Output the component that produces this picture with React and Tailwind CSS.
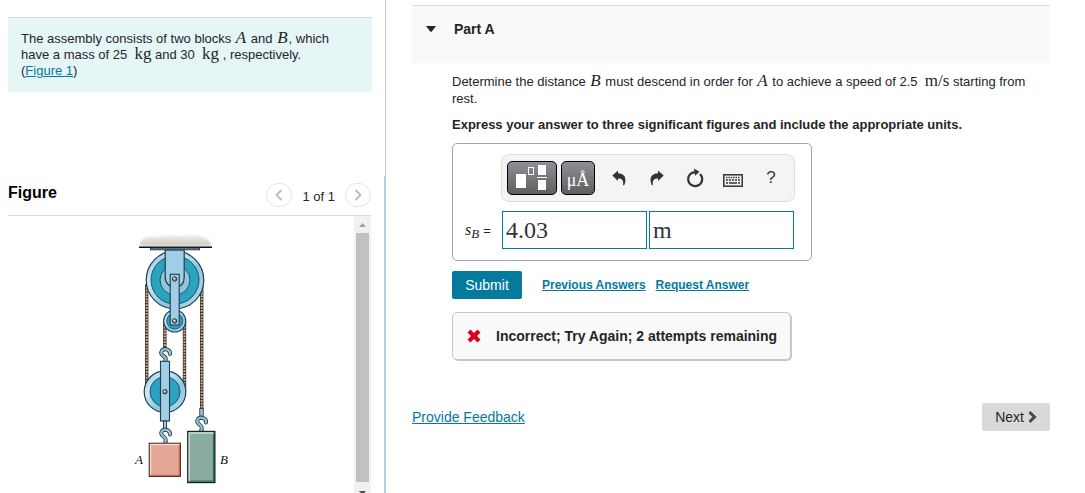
import React from "react";

function MathText({ children, italic = false }) {
  return (
    <span className={`font-["Liberation_Serif",serif] text-[17px] leading-[0] ${italic ? "px-px italic" : ""}`}>
      {children}
    </span>
  );
}

function Rope({ x, y1, y2 }) {
  return (
    <g>
      <line x1={x} x2={x} y1={y1} y2={y2} stroke="#3c3029" strokeWidth="3.4" />
      <line x1={x} x2={x} y1={y1} y2={y2} stroke="#d6b793" strokeWidth="2" strokeDasharray="1.7 1.2" />
    </g>
  );
}

function Hook({ x, y, h }) {
  const d = `M5 4.500 C5.500 0.500 0 -2 -3 1 C-7 7 4 6 0 ${h}`;
  return (
    <g transform={`translate(${x} ${y})`} fill="none" strokeLinecap="round">
      <path d={d} stroke="#26343b" strokeWidth="4" />
      <path d={d} stroke="#8fc3dc" strokeWidth="2.4" />
    </g>
  );
}

function Pin({ x, y }) {
  return (
    <g>
      <circle cx={x} cy={y} r="2.2" fill="#8b8f92" stroke="#222" strokeWidth="0.9" />
      <circle cx={x - 0.5} cy={y - 0.6} r="0.8" fill="#fff" />
    </g>
  );
}

function PulleyFigure() {
  return (
    <svg viewBox="130 225 110 262" className="ml-[122px] mt-[9px] block h-[262px] w-[110px]" role="img" aria-label="Pulley assembly with blocks A and B">
      <defs>
        <linearGradient id="ceiling" x1="0" y1="0" x2="0" y2="1">
          <stop offset="0" stopColor="#efeee8" />
          <stop offset="1" stopColor="#cfccc0" />
        </linearGradient>
        <linearGradient id="rim" x1="0" y1="0" x2="1" y2="1">
          <stop offset="0" stopColor="#83bddb" />
          <stop offset="0.3" stopColor="#d4eaf5" />
          <stop offset="0.6" stopColor="#8fc4df" />
          <stop offset="1" stopColor="#b9dcec" />
        </linearGradient>
        <filter id="soft"><feGaussianBlur stdDeviation="1" /></filter>
      </defs>
      <path d="M140 246 C139 239 147 236 155 237 C166 234 180 237 190 235 C201 235 212 239 211 246Z" fill="url(#ceiling)" filter="url(#soft)" />
      <Rope x={146.7} y1={284} y2={393} />
      <Rope x={201.7} y1={284} y2={409} />
      <Rope x={164.8} y1={321} y2={349} />
      <Rope x={184.5} y1={321} y2={391} />
      <circle cx="175" cy="280" r="28.8" fill="url(#rim)" stroke="#1c4152" strokeWidth="1.2" />
      <circle cx="175" cy="280" r="24" fill="#2ba2be" stroke="#19566c" strokeWidth="1" />
      <circle cx="175" cy="280" r="15" fill="#8fc5df" stroke="#19566c" strokeWidth="1" />
      <path d="M165.2 250H184.2V277C184.2 283 181 287 175 287C169 287 165.2 283 165.2 277Z" fill="#9fcee6" stroke="#203d4b" strokeWidth="1.2" />
      <path d="M139 247.2H212" stroke="#111" strokeWidth="1.4" />
      <rect x="150.500" y="248" width="49" height="1.800" fill="#6bb0cf" stroke="#1f2c33" strokeWidth="0.9" />
      <circle cx="174.7" cy="321" r="11" fill="url(#rim)" stroke="#1c4152" strokeWidth="1.1" />
      <circle cx="174.7" cy="321" r="8" fill="#2ba2be" stroke="#19566c" strokeWidth="0.9" />
      <rect x="170.200" y="274.300" width="9" height="50.700" fill="#9fcee6" stroke="#203d4b" strokeWidth="1.1" />
      <Pin x={174.6} y={279} />
      <Pin x={174.6} y={321} />

      <circle cx="165" cy="391.700" r="20.800" fill="url(#rim)" stroke="#1c4152" strokeWidth="1.2" />
      <circle cx="165" cy="391.700" r="15" fill="#2ba2be" stroke="#19566c" strokeWidth="1" />
      <Hook x={165} y={349.5} h={12} />
      <rect x="160.500" y="361.300" width="9" height="59.700" fill="#9fcee6" stroke="#203d4b" strokeWidth="1.1" />
      <Pin x={165} y={391.8} />
      <rect x="163.500" y="421" width="3" height="8" fill="#9fcee6" stroke="#26343b" strokeWidth="0.9" />
      <Hook x={165} y={430} h={13} />
      <rect x="199.800" y="408.500" width="3.400" height="8" fill="#9fcee6" stroke="#26343b" strokeWidth="0.9" />
      <Hook x={201} y={418} h={13} />

      <rect x="149.300" y="443.300" width="31" height="33" fill="#e2a797" stroke="#35231e" strokeWidth="1.2" />
      <path d="M150.500 475.500V444.500H179.500" fill="none" stroke="#f7d9cd" strokeWidth="1.4" />
      <path d="M150.500 475.300H179.300V445" fill="none" stroke="#d5694f" strokeWidth="1.2" />
      <rect x="187.800" y="431.500" width="27" height="51" fill="#89aba0" stroke="#16251f" strokeWidth="1.400" />
      <path d="M189.200 481V433H213" fill="none" stroke="#cbe0d7" strokeWidth="1.400" />
      <path d="M189.500 481.200H213.500V434" fill="none" stroke="#35705c" strokeWidth="1.300" />
      <g fontFamily="Liberation Serif, serif" fontStyle="italic" fontSize="13" fill="#111">
        <text x="135" y="464">A</text>
        <text x="220" y="464">B</text>
      </g>
    </svg>
  );
}

function Chevron({ flip = false }) {
  return (
    <svg viewBox="0 0 8 12" className="h-3 w-2" fill="none" stroke="#bdbdbd" strokeWidth="2" aria-hidden="true">
      <path d={flip ? "M1.500 1L6.500 6L1.500 11" : "M6.500 1L1.500 6L6.500 11"} />
    </svg>
  );
}

function Sidebar() {
  return (
    <aside className="flex h-full w-[386px] shrink-0 flex-col">
      <section className="h-[176px] shrink-0 border-r border-[#c3d0dc] pl-2 pr-[13px] pt-[17px]">
        <p className="h-[75px] border-t border-[#d3dfe0] bg-[#e6f5f6] px-[13px] pt-[13px] text-[13px] leading-4">
          The assembly consists of two blocks <MathText italic>A</MathText> and <MathText italic>B</MathText>, which
          <br />
          have a mass of 25 &nbsp;<MathText>kg</MathText> and 30 &nbsp;<MathText>kg</MathText> , respectively.
          <br />
          (<a href="#figure" className="text-[#047a9c] underline">Figure 1</a>)
        </p>
      </section>
      <section id="figure" className="flex min-h-0 flex-1 flex-col border-r-2 border-[#b9cde0] pl-2 pr-[13px]">
        <header className="flex h-10 shrink-0 items-start justify-between border-b border-[#dadada] pt-[7px]">
          <h2 className="text-[16px] font-bold leading-5 text-black">Figure</h2>
          <nav className="flex items-center gap-[10px]" aria-label="Figure pages">
            <button type="button" aria-label="Previous figure" className="flex h-6 w-[26px] items-center justify-center rounded-full border border-[#e4e4e4] bg-white">
              <Chevron />
            </button>
            <span className="pt-[3px] text-[13px] leading-4">1 of 1</span>
            <button type="button" aria-label="Next figure" className="flex h-6 w-[26px] items-center justify-center rounded-full border border-[#e4e4e4] bg-white">
              <Chevron flip />
            </button>
          </nav>
        </header>
        <div className="flex min-h-0 flex-1 overflow-hidden">
          <div className="min-w-0 flex-1 overflow-hidden">
            <PulleyFigure />
          </div>
          <div className="flex w-[17px] shrink-0 flex-col items-center bg-[#f1f1f1]" aria-hidden="true">
            <svg viewBox="0 0 17 17" className="h-[17px] w-[17px] shrink-0" fill="#a3a3a3"><path d="M5 11L8.500 7L12 11Z" /></svg>
            <div className="min-h-0 w-[13px] flex-1 bg-[#c1c1c1]" />
            <svg viewBox="0 0 17 11" className="h-[11px] w-[17px] shrink-0" fill="#505050"><path d="M5 9H12L8.500 13Z" /></svg>
          </div>
        </div>
      </section>
    </aside>
  );
}

function Toolbar() {
  const dark = "flex h-[34px] items-center justify-center rounded-[5px] border border-black bg-linear-to-b from-[#908f99] to-[#5f5f5f] text-white";
  const plain = "flex h-7 w-[38px] items-center justify-center text-[#333]";
  return (
    <div className="flex h-[48px] items-center rounded-lg border border-[#dedede] bg-[#f4f4f4] pl-[5px]">
      <button type="button" aria-label="Templates" className={`${dark} w-[50px]`}>
        <svg viewBox="0 0 32 26" className="h-[26px] w-8" fill="#fff" aria-hidden="true">
          <rect x="0" y="9" width="10" height="14" />
          <rect x="12.500" y="2.500" width="5" height="7" fill="none" stroke="#fff" />
          <rect x="22" y="0" width="8" height="10" />
          <rect x="21" y="12" width="10" height="1" />
          <rect x="22" y="15" width="8" height="10" />
        </svg>
      </button>
      <button type="button" aria-label="Units and symbols" className={`${dark} ml-1 w-[34px] pt-1 font-["Liberation_Serif",serif] text-[18px] leading-none`}>
        μÅ
      </button>
      <div className="ml-[5px] flex">
        <button type="button" aria-label="Undo" className={plain}>
          <svg viewBox="0 0 14 16" className="h-4 w-[14px]" fill="currentColor" aria-hidden="true">
            <path d="M0.300 5.500L6 0.500V3.300C12.500 3.500 15 8 12.500 14.800L11 15.500C12 10.500 10 8.500 6 8.500V11Z" />
          </svg>
        </button>
        <button type="button" aria-label="Redo" className={plain}>
          <svg viewBox="0 0 14 16" className="h-4 w-[14px]" fill="currentColor" aria-hidden="true">
            <path d="M13.700 5.500L8 0.500V3.300C1.500 3.500 -1 8 1.500 14.800L3 15.500C2 10.500 4 8.500 8 8.500V11Z" />
          </svg>
        </button>
        <button type="button" aria-label="Reset" className={plain}>
          <svg viewBox="0 0 18 20" className="h-5 w-[18px]" fill="none" stroke="currentColor" strokeWidth="2.200" aria-hidden="true">
            <path d="M10.500 4.200A7 7 0 1 0 14 6" />
            <path d="M8 0.500L13.500 3.800L9 7.800Z" fill="currentColor" stroke="none" />
          </svg>
        </button>
        <button type="button" aria-label="Keyboard" className={plain}>
          <svg viewBox="0 0 20 13" className="mt-1 h-[13px] w-5" fill="none" stroke="currentColor" aria-hidden="true">
            <rect x="0.800" y="0.800" width="18.400" height="11.400" strokeWidth="1.500" />
            <path d="M3 3.500H17" strokeWidth="1.400" strokeDasharray="1.400 1" />
            <path d="M3 6H17" strokeWidth="1.400" strokeDasharray="2 1" />
            <path d="M3 9H5M6 9H14M15 9H17" strokeWidth="1.600" />
          </svg>
        </button>
        <button type="button" aria-label="Help" className={`${plain} text-[17px]`}>?</button>
      </div>
    </div>
  );
}

function AnswerBox() {
  const field = 'h-[38px] min-w-0 flex-1 border border-[#047a9c] bg-white pl-[3px] font-["Liberation_Serif",serif] text-[24px] text-[#333] outline-none';
  return (
    <div className="flex h-[118px] w-[360px] max-w-full flex-col rounded-[5px] border border-[#a6a6a6] pl-3 pr-4 pt-[10px]">
      <div className="pl-9">
        <Toolbar />
      </div>
      <div className="mt-[9px] flex items-center pr-px">
        <label htmlFor="answer" className="flex w-[37px] shrink-0 items-baseline">
          <span className='font-["Liberation_Serif",serif] text-[16px] italic leading-none'>
            s<sub className="text-[13px]">B</sub>
          </span>
          <span className="ml-1 text-[13px] leading-none">=</span>
        </label>
        <div className="flex min-w-0 flex-1 gap-0.5">
          <input id="answer" type="text" defaultValue="4.03" className={field} />
          <input type="text" aria-label="Units" defaultValue="m" className={field} />
        </div>
      </div>
    </div>
  );
}

function Question() {
  return (
    <main className="min-w-0 flex-1 pl-[26px] pr-[35px] pt-[5px]">
      <header className="h-[58px] border-t border-[#dcdcdc] bg-[#f9f9f9] pt-[15px]">
        <button type="button" className="flex items-center pl-[14px] text-[14px] font-bold leading-4">
          <svg viewBox="0 0 10 6" className="mr-[18px] h-[6px] w-[10px]" fill="currentColor" aria-hidden="true"><path d="M0 0H10L5.800 5.500Q5 6.200 4.200 5.500Z" /></svg>
          Part A
        </button>
      </header>
      <div className="pl-10 pt-[10px]">
        <p className="pr-4 text-[13px] leading-[17px]">
          Determine the distance <MathText italic>B</MathText> must descend in order for <MathText italic>A</MathText> to achieve a speed of 2.5 &nbsp;<MathText>m/s</MathText> starting from <span>rest.</span>
        </p>
        <p className="mb-[10px] mt-[9px] text-[13px] font-bold leading-[17px]">
          Express your answer to three significant figures and include the appropriate units.
        </p>
        <AnswerBox />
        <div className="mt-[10px] flex items-center text-[12px] font-bold text-[#047a9c]">
          <button type="button" className="h-7 w-[70px] rounded-xs bg-[#047a9c] text-[14px] font-normal text-white">Submit</button>
          <a href="#previous" className="ml-5 underline">Previous Answers</a>
          <a href="#request" className="ml-2.5 underline">Request Answer</a>
        </div>
        <div role="status" className="mt-[13px] flex h-12 w-[339px] max-w-full items-center rounded-[5px] border border-[#c7c7c7] bg-[#f9f9f9] pl-[14px] text-[14px] font-bold shadow-[1px_1px_0_0_#c7c7c7]">
          <svg viewBox="0 0 14 14" className="mr-[15px] h-[14px] w-[14px] shrink-0" fill="#db0020" aria-hidden="true">
            <path d="M3.500 0.500L7 4L10.500 0.500L13.500 3.500L10 7L13.500 10.500L10.500 13.500L7 10L3.500 13.500L0.500 10.500L4 7L0.500 3.500Z" />
          </svg>
          <span className="whitespace-nowrap">Incorrect; Try Again; 2 attempts remaining</span>
        </div>
      </div>
      <footer className="mt-[43px] flex items-center justify-between text-[14px]">
        <a href="#feedback" className="text-[#047a9c] underline">Provide Feedback</a>
        <button type="button" className="flex h-7 items-center gap-1 rounded-xs bg-[#d9d9d9] px-[13px]">
          Next
          <svg viewBox="0 0 9 12" className="h-3 w-[9px]" fill="none" stroke="#4a4a4a" strokeWidth="3" aria-hidden="true"><path d="M1.500 1.200L6.500 6L1.500 10.800" /></svg>
        </button>
      </footer>
    </main>
  );
}

export default function App() {
  return (
    <div className='flex h-screen overflow-hidden bg-white font-["Liberation_Sans",Arial,sans-serif] text-[#252525]'>
      <Sidebar />
      <Question />
    </div>
  );
}
